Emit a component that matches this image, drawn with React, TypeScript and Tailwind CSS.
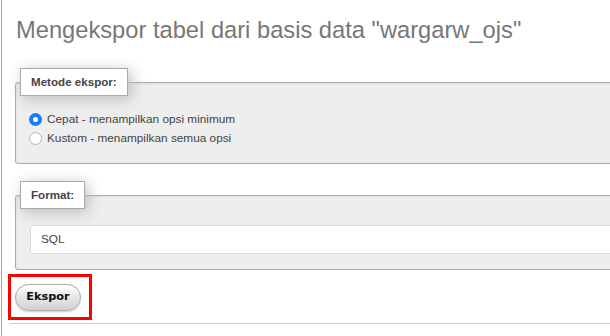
import React from "react";

function Radio({ checked }: { checked?: boolean }) {
  return checked ? (
    <span className="ml-[13px] w-[13px] h-[13px] rounded-full bg-[#1a7cf5] flex items-center justify-center shrink-0">
      <span className="w-[5px] h-[5px] rounded-full bg-white" />
    </span>
  ) : (
    <span className="ml-[13px] w-[13px] h-[13px] rounded-full bg-white border border-[#b5b5b5] shrink-0" />
  );
}

export default function App() {
  const body = "font-['Liberation_Sans',Arial,sans-serif]";
  return (
    <div className={`w-[610px] h-[336px] overflow-hidden bg-white pl-px ${body}`}>
      <div className="h-[336px] border-l border-[#aaa] flex flex-col items-start">
        <h2 className="ml-[14px] mt-[16px] text-[23.7px] leading-[28px] font-normal text-[#777] whitespace-nowrap">
          Mengekspor tabel dari basis data "wargarw_ojs"
        </h2>

        <fieldset className="mt-[24px] ml-[13px] w-[640px] shrink-0 border border-[#aaa] rounded-[3px] bg-[#eee] p-0 m-0 shadow-[inset_0_1px_2px_#ddd]">
          <legend className="ml-[4px] px-[10px] py-[6px] bg-white border border-[#aaa] text-[11.6px] leading-[14px] font-bold text-[#444] shadow-[3px_3px_15px_#bbb]">
            Metode ekspor:
          </legend>
          <div className="pt-[14px] pb-[15px]">
            <div className="flex items-center h-[19px] text-[11.8px] text-[#444]">
              <Radio checked />
              <span className="ml-[5px]">Cepat - menampilkan opsi minimum</span>
            </div>
            <div className="flex items-center h-[19px] text-[11.8px] text-[#444]">
              <Radio />
              <span className="ml-[5px]">Kustom - menampilkan semua opsi</span>
            </div>
          </div>
        </fieldset>

        <fieldset className="mt-[17px] ml-[13px] w-[640px] shrink-0 border border-[#aaa] rounded-[3px] bg-[#eee] p-0 m-0 shadow-[inset_0_1px_2px_#ddd]">
          <legend className="ml-[4px] px-[10px] py-[6px] bg-white border border-[#aaa] text-[11.6px] leading-[14px] font-bold text-[#444] shadow-[3px_3px_15px_#bbb]">
            Format:
          </legend>
          <div className="pt-[16px] pb-[15px]">
            <div className="ml-[14px] h-[29px] w-[620px] bg-white border border-[#d9dde3] rounded-[3px] flex items-center pl-[10px] text-[11.8px] text-[#444]">
              SQL
            </div>
          </div>
        </fieldset>

        <div className="mt-[4px] ml-[6px] w-[84px] h-[46px] border-[3px] border-[#ff0000] pt-[7px] pl-[4px]">
          <button className="w-[66px] h-[27px] rounded-full border border-[#aaa] bg-gradient-to-b from-white to-[#d0d0d0] flex items-center justify-center font-['DejaVu_Sans',sans-serif] font-bold text-[11.3px] text-[#111] shadow-[0_1px_2px_#ccc]">
            Ekspor
          </button>
        </div>

        <div className="mt-[3px] ml-[8px] w-[620px] h-px bg-[#ccc]" />
      </div>
    </div>
  );
}
